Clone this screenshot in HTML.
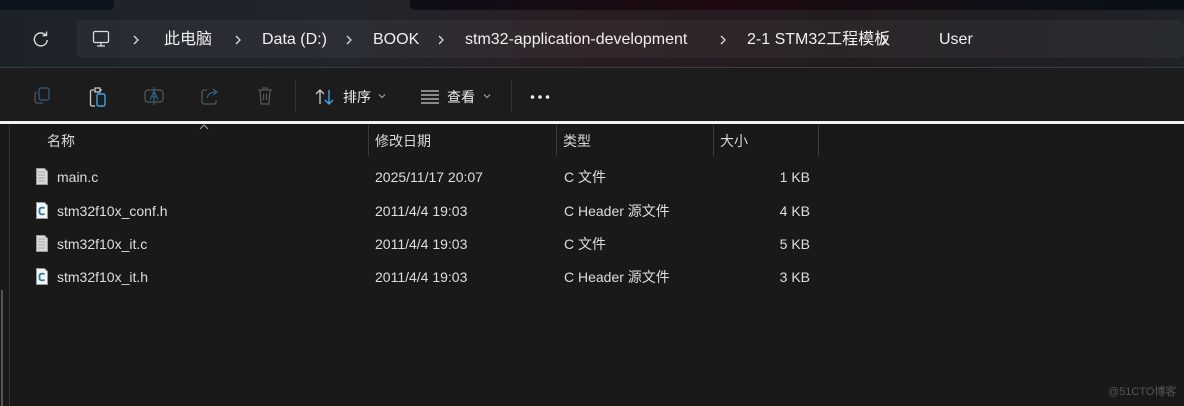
<!DOCTYPE html>
<html><head><meta charset="utf-8"><style>
*{margin:0;padding:0;box-sizing:border-box}
body{width:1184px;height:406px;overflow:hidden;background:#191919;font-family:"Liberation Sans","Noto Sans CJK SC",sans-serif;color:#e6e6e6;position:relative}
.abs{position:absolute;line-height:20px;height:20px}
.top{left:0;top:0;width:1184px;height:67px;background:linear-gradient(90deg,#1d2229 0%,#22252b 30%,#2a1d22 50%,#221c20 70%,#1f2227 100%)}
.tab1{left:0;top:0;width:114px;height:10px;background:#0c1420;border-radius:0 0 5px 0}
.tab2{left:410px;top:0;width:774px;height:10px;background:linear-gradient(90deg,#0f0d18,#1e0a10 40%,#0b1018 90%);border-radius:0 0 0 5px}
.addr{left:77px;top:20px;width:1107px;height:38px;background:rgba(255,255,255,0.045);border-radius:6px}
.crumb{top:30px;font-size:16px;color:#f0f0f0;white-space:nowrap}
.tb{left:0;top:67px;width:1184px;height:55px;background:#1c1c1c;border-top:1px solid #3a3a3a}
.wl{left:0;top:121px;width:1184px;height:3px;background:#f2f2f2}
.hdr{top:131px;font-size:14px;color:#d8d8d8}
.col{top:125px;width:1px;height:31px;background:#3c3c3c}
.cell{font-size:14px;color:#dedede;white-space:nowrap}
</style></head><body>
<div class="abs top" style="height:67px"></div>
<div class="abs tab1" style="height:10px"></div>
<div class="abs tab2" style="height:10px"></div>
<div class="abs addr" style="height:38px"></div>
<svg class="abs" style="left:32px;top:30px" width="18" height="18" viewBox="0 0 18 18"><path d="M14 4.5A6.5 6.5 0 1 0 15.3 9" fill="none" stroke="#ddd" stroke-width="1.4"/><path d="M10.5 4.5h4v-4" fill="none" stroke="#ddd" stroke-width="1.4"/></svg>
<svg class="abs" style="left:91px;top:29px" width="20" height="20" viewBox="0 0 20 20"><rect x="2.5" y="2.5" width="15" height="11" rx="1.5" fill="none" stroke="#ddd" stroke-width="1.3"/><path d="M10 13.5v3M6 17h8" stroke="#ddd" stroke-width="1.3"/></svg>
<svg class="abs" style="left:0;top:0;height:67px" width="1184" height="67"><g fill="none" stroke="#ddd" stroke-width="1.3"><path d="M134 36l4 4-4 4M236 36l4 4-4 4M347 36l4 4-4 4M439 36l4 4-4 4M721 36l4 4-4 4M882 36l4 4-4 4"/></g></svg>
<span class="abs crumb" style="left:164px">此电脑</span>
<span class="abs crumb" style="left:262px">Data (D:)</span>
<span class="abs crumb" style="left:373px">BOOK</span>
<span class="abs crumb" style="left:465px">stm32-application-development</span>
<span class="abs crumb" style="left:747px">2-1 STM32工程模板</span>
<span class="abs crumb" style="left:939px">User</span>

<div class="abs tb" style="height:55px"></div>
<svg class="abs" style="left:32px;top:86px;height:20px" width="20" height="20" viewBox="0 0 20 20"><rect x="7" y="2" width="10" height="12" rx="2" fill="none" stroke="#2b5f82" stroke-width="1.3"/><path d="M5 6a2 2 0 0 0-2 2v7a2 2 0 0 0 2 2h6" fill="none" stroke="#555" stroke-width="1.3"/></svg>
<svg class="abs" style="left:88px;top:86px;height:22px" width="20" height="22" viewBox="0 0 20 22"><path d="M6 4H4a1.5 1.5 0 0 0-1.5 1.5v13A1.5 1.5 0 0 0 4 20h3M7 2h5v4H7z M12 4h2" fill="none" stroke="#ccc" stroke-width="1.3"/><rect x="9" y="8" width="8" height="12" rx="1.5" fill="none" stroke="#3ea4e8" stroke-width="1.4"/></svg>
<svg class="abs" style="left:143px;top:86px" width="22" height="20" viewBox="0 0 22 20"><rect x="2" y="4" width="18" height="12" rx="3" fill="none" stroke="#555" stroke-width="1.3"/><path d="M7 14l4-9 4 9M8.5 11h5" fill="none" stroke="#2b5f82" stroke-width="1.2"/><path d="M11 1v18" stroke="#2b5f82" stroke-width="1.2"/></svg>
<svg class="abs" style="left:199px;top:86px" width="22" height="20" viewBox="0 0 22 20"><path d="M8 4H5a2 2 0 0 0-2 2v10a2 2 0 0 0 2 2h10a2 2 0 0 0 2-2v-2" fill="none" stroke="#555" stroke-width="1.3"/><path d="M8 12c1-4 4-6 9-6M14 3l4 3-4 3" fill="none" stroke="#2b5f82" stroke-width="1.3"/></svg>
<svg class="abs" style="left:255px;top:86px" width="20" height="20" viewBox="0 0 20 20"><path d="M3 4h14M8 4V2h4v2M5 4l1 14h8l1-14M8.5 8v6M11.5 8v6" fill="none" stroke="#555" stroke-width="1.3"/></svg>
<div class="abs" style="left:295px;top:79px;width:1px;height:34px;background:#333"></div>
<svg class="abs" style="left:314px;top:87px" width="22" height="20" viewBox="0 0 22 20"><path d="M6 17V3M2 7l4-4 4 4" fill="none" stroke="#ccc" stroke-width="1.3"/><path d="M15 3v14M11 13l4 4 4-4" fill="none" stroke="#3ea4e8" stroke-width="1.4"/></svg>
<span class="abs cell" style="left:343px;top:87px;color:#eee">排序</span>
<svg class="abs" style="left:378px;top:93px;height:6px" width="8" height="6"><path d="M1 1.5l3 3 3-3" fill="none" stroke="#aaa" stroke-width="1"/></svg>
<svg class="abs" style="left:420px;top:89px;height:16px" width="20" height="16" viewBox="0 0 20 16"><path d="M1 2h18M1 6h18M1 10h18M1 14h18" stroke="#ccc" stroke-width="1.3"/></svg>
<span class="abs cell" style="left:447px;top:87px;color:#eee">查看</span>
<svg class="abs" style="left:483px;top:93px;height:6px" width="8" height="6"><path d="M1 1.5l3 3 3-3" fill="none" stroke="#aaa" stroke-width="1"/></svg>
<div class="abs" style="left:511px;top:79px;width:1px;height:34px;background:#333"></div>
<svg class="abs" style="left:530px;top:94px;height:6px" width="22" height="6"><circle cx="2.5" cy="3" r="1.8" fill="#eee"/><circle cx="10" cy="3" r="1.8" fill="#eee"/><circle cx="17.5" cy="3" r="1.8" fill="#eee"/></svg>

<div class="abs wl" style="height:3px"></div>
<div class="abs" style="left:9px;top:124px;width:1px;height:282px;background:#333"></div>
<div class="abs" style="left:1px;top:290px;width:2px;height:116px;background:#555"></div>
<svg class="abs" style="left:199px;top:124px;height:6px" width="10" height="6"><path d="M1 5l4-4 4 4" fill="none" stroke="#aaa" stroke-width="1"/></svg>
<span class="abs hdr" style="left:47px">名称</span>
<div class="abs col" style="left:368px;height:31px"></div>
<span class="abs hdr" style="left:375px">修改日期</span>
<div class="abs col" style="left:556px;height:31px"></div>
<span class="abs hdr" style="left:563px">类型</span>
<div class="abs col" style="left:713px;height:31px"></div>
<span class="abs hdr" style="left:720px">大小</span>
<div class="abs col" style="left:818px;height:31px"></div>

<svg class="abs" style="left:34px;top:168px;height:122px" width="16" height="122">
<g stroke="#999" stroke-width="1"><path d="M2.5 0.5h8l3 3v13h-11z" fill="#d8d8d8"/><path d="M2.5 34.5h8l3 3v13h-11z" fill="#f4f4f4"/><path d="M2.5 67.5h8l3 3v13h-11z" fill="#d8d8d8"/><path d="M2.5 100.5h8l3 3v13h-11z" fill="#f4f4f4"/></g>
<g stroke="#aaa" stroke-width="1"><path d="M4 4h7M4 7h7M4 10h7M4 13h7M4 71h7M4 74h7M4 77h7M4 80h7"/></g>
<g fill="none" stroke="#2a7aa8" stroke-width="1.8"><path d="M10.5 40 Q5 38.5 5.5 43 Q5 47.5 10.5 46"/><path d="M10.5 106 Q5 104.5 5.5 109 Q5 113.5 10.5 112"/></g>
</svg>

<span class="abs cell" style="left:57px;top:167px">main.c</span>
<span class="abs cell" style="left:57px;top:201px">stm32f10x_conf.h</span>
<span class="abs cell" style="left:57px;top:234px">stm32f10x_it.c</span>
<span class="abs cell" style="left:57px;top:267px">stm32f10x_it.h</span>
<span class="abs cell" style="left:375px;top:167px">2025/11/17 20:07</span>
<span class="abs cell" style="left:375px;top:201px">2011/4/4 19:03</span>
<span class="abs cell" style="left:375px;top:234px">2011/4/4 19:03</span>
<span class="abs cell" style="left:375px;top:267px">2011/4/4 19:03</span>
<span class="abs cell" style="left:564px;top:167px">C 文件</span>
<span class="abs cell" style="left:564px;top:201px">C Header 源文件</span>
<span class="abs cell" style="left:564px;top:234px">C 文件</span>
<span class="abs cell" style="left:564px;top:267px">C Header 源文件</span>
<span class="abs cell" style="left:740px;width:70px;text-align:right;top:167px">1 KB</span>
<span class="abs cell" style="left:740px;width:70px;text-align:right;top:201px">4 KB</span>
<span class="abs cell" style="left:740px;width:70px;text-align:right;top:234px">5 KB</span>
<span class="abs cell" style="left:740px;width:70px;text-align:right;top:267px">3 KB</span>
<span class="abs" style="left:1108px;top:382px;font-size:11px;color:#555">@51CTO博客</span>
</body></html>
